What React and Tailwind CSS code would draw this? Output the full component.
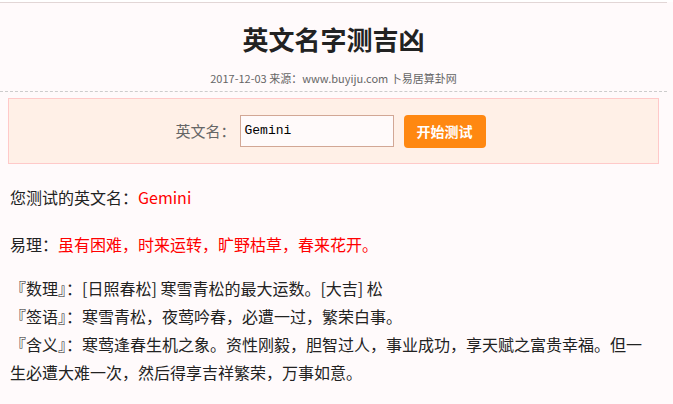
export default function App() {
    const font = { fontFamily: '"Noto Sans CJK SC", "Noto Sans", sans-serif' };

    return (
        <div className="min-h-screen bg-[#fffafb] text-[#222]" style={font}>
            <div className="w-[667px]">
                {/* top rule */}
                <div className="mt-[2px] h-px bg-[#e2d6d6]" />

                {/* header */}
                <div className="pt-[16px] pb-[4px] border-b border-dashed border-[#cccccc] text-center">
                    <h1 className="text-[26px] leading-[39px] font-bold text-[#222]">英文名字测吉凶</h1>
                    <div className="mt-[11px] text-[11px] leading-[18px] text-[#666]">
                        2017-12-03 来源：www.buyiju.com 卜易居算卦网
                    </div>
                </div>

                {/* form */}
                <div className="mx-[8px] mt-[6px] h-[66px] pr-[6px] border border-[#ffc9c9] bg-[#fff0e7] flex items-center justify-center">
                    <span className="text-[15px] text-[#666] mr-[4px]">英文名：</span>
                    <div className="w-[154px] h-[32px] border border-[#d2a795] bg-[#fffafa] flex items-center px-[4px] text-[13px] text-black" style={{ fontFamily: '"Liberation Mono", monospace' }}>
                        Gemini
                    </div>
                    <button className="ml-[10px] w-[82px] h-[33px] rounded-[4px] bg-[#ff8811] text-white text-[14px] font-bold">
                        开始测试
                    </button>
                </div>

                {/* result */}
                <div className="px-[10px] text-[16px] leading-[28px] text-[#222]">
                    <p className="mt-[19px]">
                        您测试的英文名：<span className="text-[#ff0000]">Gemini</span>
                    </p>
                    <p className="mt-[19px]">
                        易理：<span className="text-[#ff0000]">虽有困难，时来运转，旷野枯草，春来花开。</span>
                    </p>
                    <p className="mt-[16px]">
                        『数理』：[日照春松] 寒雪青松的最大运数。[大吉] 松<br />
                        『签语』：寒雪青松，夜莺吟春，必遭一过，繁荣白事。<br />
                        『含义』：寒莺逢春生机之象。资性刚毅，胆智过人，事业成功，享天赋之富贵幸福。但一生必遭大难一次，然后得享吉祥繁荣，万事如意。
                    </p>
                </div>
            </div>
        </div>
    );
}
